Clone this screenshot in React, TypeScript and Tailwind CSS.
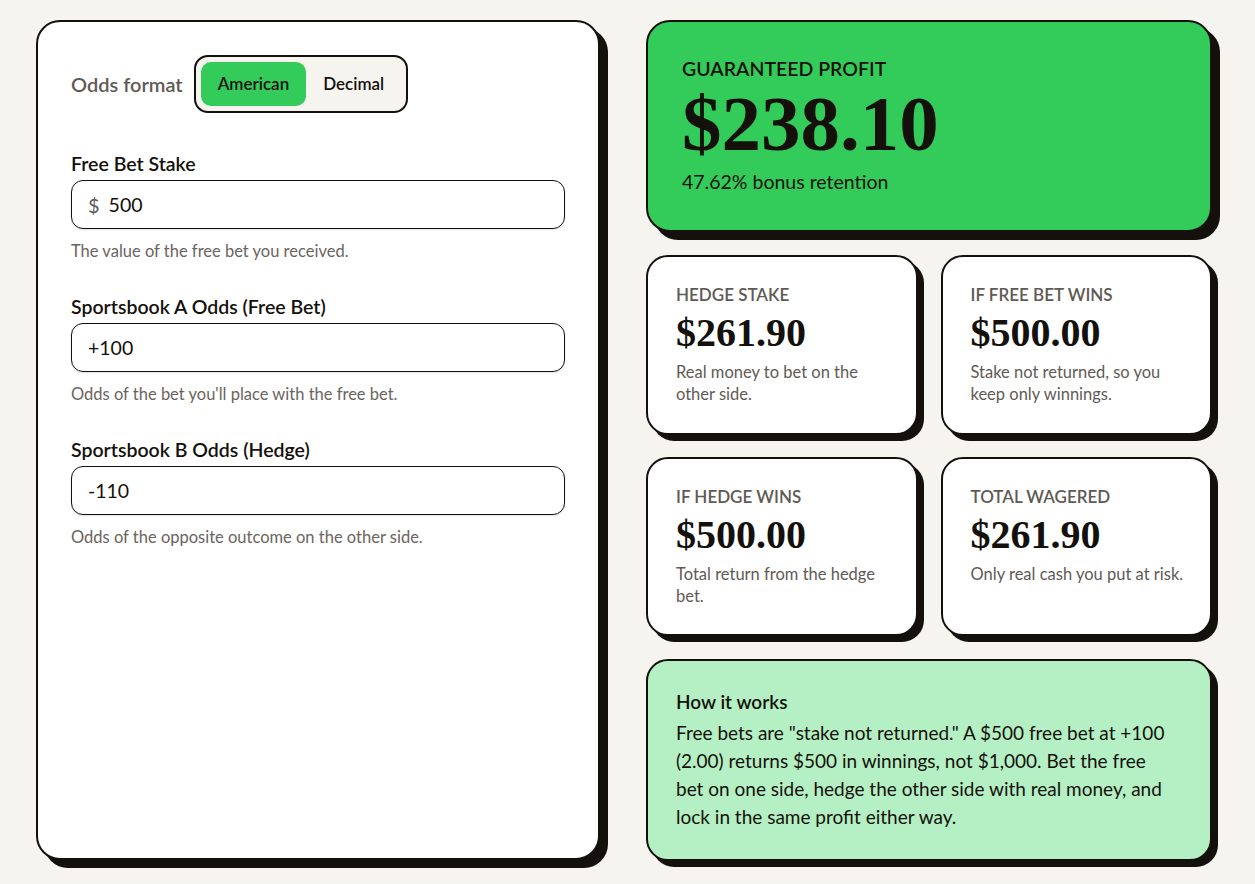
import React from "react";

const body = { fontFamily: "Lato, 'Noto Sans', sans-serif" };
const serif = { fontFamily: "'Liberation Serif', 'DejaVu Serif', serif" };

function Field({ label, value, prefix, help }: { label: string; value: string; prefix?: string; help: string }) {
  return (
    <div className="flex flex-col">
      <div className="text-[19.5px] font-semibold text-[#14100c] leading-[22px]">{label}</div>
      <div className="mt-[5px] flex h-[49px] items-center rounded-[12px] border border-[#14100c] bg-white px-4 shadow-[0_1px_2px_rgba(0,0,0,0.12)]">
        {prefix && <span className="mr-[9px] text-[20px] text-[#5f5a55]">{prefix}</span>}
        <span className="text-[19.5px] text-[#14100c]">{value}</span>
      </div>
      <div className="mt-[11px] text-[16.5px] leading-[22px] text-[#6b645e]">{help}</div>
    </div>
  );
}

function Stat({ label, value, desc }: { label: string; value: string; desc: string }) {
  return (
    <div className="flex h-full flex-col rounded-[22px] border-2 border-[#14100c] bg-white pl-[28px] pr-[16px] pt-[28px] shadow-[6px_6px_0_#14100c]">
      <div className="text-[17px] font-semibold uppercase leading-[20px] text-[#5f5a55]">{label}</div>
      <div className="mt-[8px] text-[40px] font-bold leading-[40px] text-[#14100c]" style={serif}>{value}</div>
      <div className="mt-[8px] text-[16.5px] leading-[22px] text-[#5f5a55]">{desc}</div>
    </div>
  );
}

export default function App() {
  return (
    <div className="min-h-[884px] w-full bg-[#f6f4ef]" style={body}>
      <div className="grid grid-cols-[564px_566px] gap-x-[46px] pl-[36px] pt-[20px]">
        <div className="h-[840px] rounded-[24px] border-2 border-[#14100c] bg-white px-[33px] pt-[33px] shadow-[8px_8px_0_#14100c]">
          <div className="flex items-center gap-[11px]">
            <span className="text-[20px] font-semibold text-[#5f5a55]">Odds format</span>
            <div className="flex items-center rounded-[14px] border-2 border-[#14100c] bg-[#f6f4ef] p-[5px]">
              <div className="flex h-[44px] items-center rounded-[10px] bg-[#33cc5a] px-[17px] text-[17px] font-semibold text-[#14100c]">American</div>
              <div className="flex h-[44px] items-center px-[17px] text-[17px] font-semibold text-[#14100c]">Decimal</div>
            </div>
          </div>
          <div className="mt-[40px] flex flex-col gap-[34px]">
            <Field label="Free Bet Stake" prefix="$" value="500" help="The value of the free bet you received." />
            <Field label="Sportsbook A Odds (Free Bet)" value="+100" help="Odds of the bet you'll place with the free bet." />
            <Field label="Sportsbook B Odds (Hedge)" value="-110" help="Odds of the opposite outcome on the other side." />
          </div>
        </div>

        <div className="flex flex-col">
          <div className="h-[212px] rounded-[24px] border-2 border-[#14100c] bg-[#33cc5a] px-[34px] pt-[36px] shadow-[8px_8px_0_#14100c]">
            <div className="text-[19.5px] font-semibold uppercase leading-[22px] text-[#14100c]">Guaranteed Profit</div>
            <div className="mt-[4px] text-[79px] font-bold leading-[80px] text-[#14100c]" style={serif}>$238.10</div>
            <div className="mt-[6px] text-[19.5px] leading-[24px] text-[#14100c]">47.62% bonus retention</div>
          </div>
          <div className="mt-[23px] grid h-[180px] grid-cols-2 gap-x-[23px]">
            <Stat label="Hedge Stake" value="$261.90" desc="Real money to bet on the other side." />
            <Stat label="If Free Bet Wins" value="$500.00" desc="Stake not returned, so you keep only winnings." />
          </div>
          <div className="mt-[22px] grid h-[179px] grid-cols-2 gap-x-[23px]">
            <Stat label="If Hedge Wins" value="$500.00" desc="Total return from the hedge bet." />
            <Stat label="Total Wagered" value="$261.90" desc="Only real cash you put at risk." />
          </div>
          <div className="mt-[23px] h-[202px] rounded-[22px] border-2 border-[#14100c] bg-[#b4f0c3] pl-[28px] pr-[38px] pt-[30px] shadow-[6px_6px_0_#14100c]">
            <div className="text-[19px] font-semibold leading-[22px] text-[#14100c]">How it works</div>
            <p className="mt-[6px] text-[19px] leading-[28px] text-[#14100c]">
              Free bets are "stake not returned." A $500 free bet at +100 (2.00) returns $500 in winnings, not $1,000. Bet the free bet on one side, hedge the other side with real money, and lock in the same profit either way.
            </p>
          </div>
        </div>
      </div>
    </div>
  );
}
